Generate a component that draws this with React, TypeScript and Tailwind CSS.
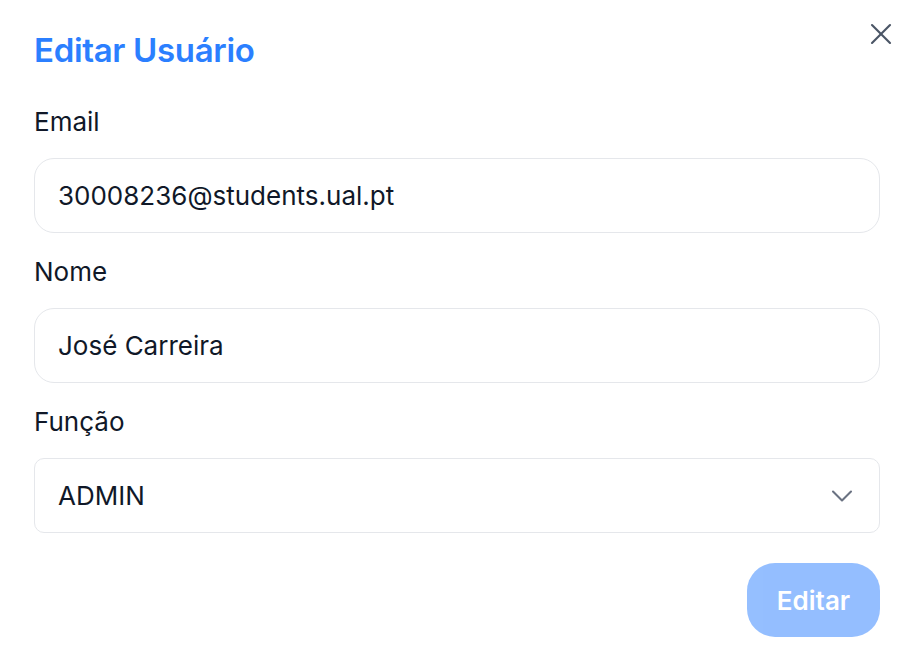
import React from "react";
import { X, ChevronDown } from "lucide-react";

export default function App() {
  return (
    <div
      className="w-[922px] h-[668px] bg-white relative"
      style={{ fontFamily: "Inter, 'Noto Sans', sans-serif" }}
    >
      {/* Close button */}
      <button className="absolute top-[16px] right-[23px] text-gray-600">
        <X size={36} strokeWidth={1.4} />
      </button>

      <div className="pl-[34px] pr-[42px] pt-[30px]">
        <h2 className="text-[33px] leading-[40px] font-semibold text-blue-500 tracking-[-0.01em]">
          Editar Usuário
        </h2>

        <div className="mt-[37px] flex flex-col">
          <label className="text-[26px] leading-[30px] text-gray-900">Email</label>
          <div className="mt-[21px] h-[75px] rounded-[20px] border border-gray-200 flex items-center px-[23px] text-[26px] text-gray-900">
            30008236@students.ual.pt
          </div>

          <label className="mt-[24px] text-[26px] leading-[30px] text-gray-900">Nome</label>
          <div className="mt-[21px] h-[75px] rounded-[20px] border border-gray-200 flex items-center px-[23px] text-[26px] text-gray-900">
            José Carreira
          </div>

          <label className="mt-[24px] text-[26px] leading-[30px] text-gray-900">Função</label>
          <div className="mt-[21px] h-[75px] rounded-[10px] border border-gray-200 flex items-center justify-between pl-[23px] pr-[19px] text-[26px] text-gray-900">
            <span>ADMIN</span>
            <ChevronDown size={36} strokeWidth={1.4} className="text-gray-500" />
          </div>

          <div className="mt-[30px] flex justify-end">
            <button
              disabled
              className="h-[74px] w-[133px] rounded-[28px] bg-blue-500 opacity-50 text-white text-[26px] font-semibold"
            >
              Editar
            </button>
          </div>
        </div>
      </div>
    </div>
  );
}
